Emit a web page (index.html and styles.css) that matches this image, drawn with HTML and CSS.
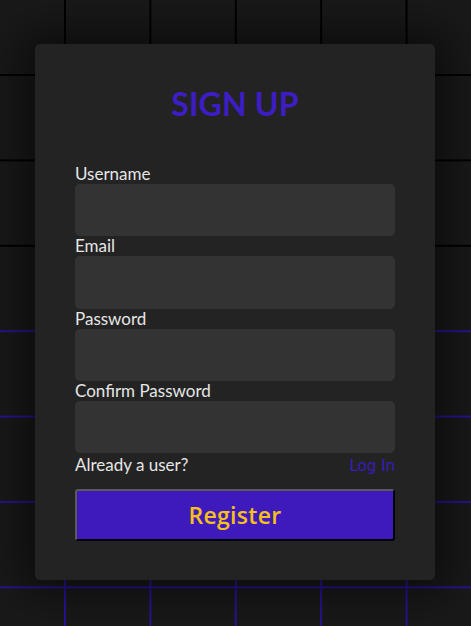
FILE: index.html
```html
<!DOCTYPE html>
<html lang="en">
<head>
<meta charset="utf-8">
<title>Sign Up</title>
<link rel="stylesheet" href="styles.css">
</head>
<body>
<div class="grid-top"></div>
<main class="page">
  <form class="card">
    <h1 class="title">SIGN UP</h1>
    <div class="field">
      <label class="label" for="username">Username</label>
      <input class="input" id="username" type="text">
    </div>
    <div class="field">
      <label class="label" for="email">Email</label>
      <input class="input" id="email" type="email">
    </div>
    <div class="field">
      <label class="label" for="password">Password</label>
      <input class="input" id="password" type="password">
    </div>
    <div class="field">
      <label class="label" for="confirm">Confirm Password</label>
      <input class="input" id="confirm" type="password">
    </div>
    <div class="meta">
      <span class="meta-text">Already a user?</span>
      <a class="login" href="#">Log In</a>
    </div>
    <button class="register" type="button">Register</button>
  </form>
</main>
</body>
</html>
```
FILE: styles.css
```css
html, body {
  margin: 0;
  padding: 0;
  height: 100%;
}

body {
  position: relative;
  background-color: #191919;
  background-image:
    linear-gradient(to right, #2a1296 0, #2a1296 2px, transparent 2px),
    linear-gradient(to bottom, #2a1296 0, #2a1296 2px, transparent 2px);
  background-size: 85.4px 85.4px;
  background-position: 64px 74px;
  font-family: Lato, "Noto Sans", sans-serif;
  overflow: hidden;
}

.grid-top {
  position: absolute;
  left: 0;
  top: 0;
  right: 0;
  height: 290px;
  background-color: #191919;
  background-image:
    linear-gradient(to right, #000 0, #000 2px, transparent 2px),
    linear-gradient(to bottom, #000 0, #000 2px, transparent 2px);
  background-size: 85.4px 85.4px;
  background-position: 64px 74px;
}

.page {
  position: relative;
  display: flex;
  justify-content: flex-start;
  padding-top: 44px;
  padding-left: 35px;
}

.card {
  width: 320px;
  padding: 40px 40px 39px;
  background: #232323;
  border-radius: 5px;
  box-shadow: 0 0 40px 14px rgba(0, 0, 0, 0.5);
  display: flex;
  flex-direction: column;
}

.title {
  margin: 0 0 40px;
  text-align: center;
  color: #3d1dc4;
  font-size: 32px;
  font-weight: 700;
  line-height: 40px;
  letter-spacing: 0.2px;
}

.field {
  display: flex;
  flex-direction: column;
}

.label {
  color: #e6e6e6;
  font-size: 17px;
  line-height: 20px;
  height: 20px;
}

.input {
  box-sizing: border-box;
  height: 52.3px;
  border: none;
  border-radius: 5px;
  background: #333333;
  margin: 0;
  padding: 0 12px;
  color: #eee;
  font-size: 16px;
  outline: none;
}

.meta {
  display: flex;
  justify-content: space-between;
  align-items: baseline;
  height: 20px;
  margin-top: 1px;
}

.meta-text {
  color: #e6e6e6;
  font-size: 17px;
}

.login {
  color: #3a1cbd;
  font-family: "DejaVu Sans", sans-serif;
  font-size: 15px;
  text-decoration: none;
}

.register {
  margin-top: 15px;
  height: 52px;
  box-sizing: border-box;
  background: #3e1abd;
  border: 2px solid;
  border-color: #5a5a5a #000 #000 #5a5a5a;
  border-radius: 3px;
  color: #f5c018;
  font-family: "Open Sans", sans-serif;
  font-weight: 600;
  font-size: 23px;
  letter-spacing: 0.3px;
  padding: 0;
  cursor: pointer;
}
```
